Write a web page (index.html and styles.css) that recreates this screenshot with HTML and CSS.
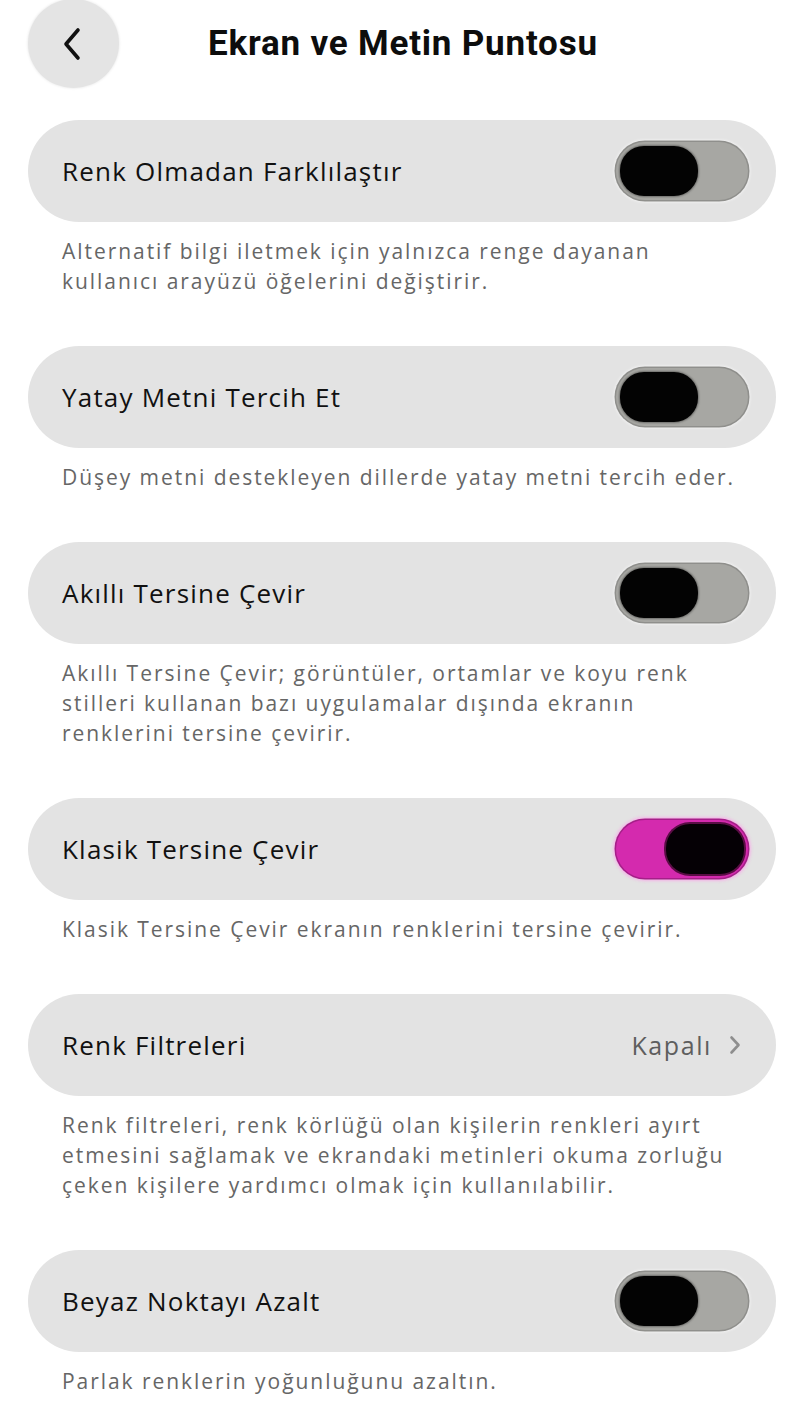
FILE: index.html
```html
<!DOCTYPE html>
<html lang="tr">
<head>
<meta charset="utf-8">
<link rel="stylesheet" href="styles.css">
</head>
<body>
<div class="page">
  <header class="header">
    <div class="back">
      <svg width="26" height="36" viewBox="0 0 26 36"><path d="M19 4 L7 18 L19 32" fill="none" stroke="#111" stroke-width="3.6" stroke-linecap="round" stroke-linejoin="round"/></svg>
    </div>
    <h1 class="title">Ekran ve Metin Puntosu</h1>
  </header>

  <section class="group">
    <div class="row"><span class="label">Renk Olmadan Farklılaştır</span><span class="toggle"><span class="thumb"></span></span></div>
    <p class="desc">Alternatif bilgi iletmek için yalnızca renge dayanan<br>kullanıcı arayüzü öğelerini değiştirir.</p>
  </section>

  <section class="group">
    <div class="row"><span class="label">Yatay Metni Tercih Et</span><span class="toggle"><span class="thumb"></span></span></div>
    <p class="desc">Düşey metni destekleyen dillerde yatay metni tercih eder.</p>
  </section>

  <section class="group">
    <div class="row"><span class="label">Akıllı Tersine Çevir</span><span class="toggle"><span class="thumb"></span></span></div>
    <p class="desc">Akıllı Tersine Çevir; görüntüler, ortamlar ve koyu renk<br>stilleri kullanan bazı uygulamalar dışında ekranın<br>renklerini tersine çevirir.</p>
  </section>

  <section class="group">
    <div class="row"><span class="label">Klasik Tersine Çevir</span><span class="toggle on"><span class="thumb"></span></span></div>
    <p class="desc">Klasik Tersine Çevir ekranın renklerini tersine çevirir.</p>
  </section>

  <section class="group">
    <div class="row"><span class="label">Renk Filtreleri</span><span class="value">Kapalı<svg class="chev" width="14" height="22" viewBox="0 0 14 22"><path d="M3.5 3.5 L10.5 11 L3.5 18.5" fill="none" stroke="#8e8e8e" stroke-width="2.6" stroke-linecap="round" stroke-linejoin="round"/></svg></span></div>
    <p class="desc">Renk filtreleri, renk körlüğü olan kişilerin renkleri ayırt<br>etmesini sağlamak ve ekrandaki metinleri okuma zorluğu<br>çeken kişilere yardımcı olmak için kullanılabilir.</p>
  </section>

  <section class="group">
    <div class="row"><span class="label">Beyaz Noktayı Azalt</span><span class="toggle"><span class="thumb"></span></span></div>
    <p class="desc">Parlak renklerin yoğunluğunu azaltın.</p>
  </section>
</div>
</body>
</html>
```

FILE: styles.css
```css
html, body {
  margin: 0;
  padding: 0;
  background: #ffffff;
}
body {
  font-family: "Open Sans", "Noto Sans", "DejaVu Sans", sans-serif;
  color: #111;
}
.page {
  width: 800px;
  padding: 0 24px 0 28px;
  box-sizing: border-box;
}
.header {
  height: 120px;
  display: flex;
  align-items: flex-start;
}
.back {
  width: 91px;
  height: 89px;
  margin-top: -1px;
  border-radius: 50%;
  background: #e4e4e4;
  box-shadow: 0 0 3px rgba(0,0,0,0.12);
  display: flex;
  align-items: center;
  justify-content: center;
  box-sizing: border-box;
  padding-right: 4px;
}
.title {
  margin: 22px 0 0 89px;
  font-family: "Roboto", "Liberation Sans", sans-serif;
  font-weight: 700;
  font-size: 35px;
  letter-spacing: 0.8px;
  line-height: 44px;
  color: #0d0d0d;
}
.row {
  height: 102px;
  border-radius: 51px;
  background: #e3e3e3;
  display: flex;
  align-items: center;
  justify-content: space-between;
  padding: 0 28px 0 34px;
  box-sizing: border-box;
}
.label {
  font-size: 26px;
  letter-spacing: 1.2px;
  color: #111;
}
.toggle {
  width: 132px;
  height: 58px;
  border-radius: 29px;
  background: #a7a7a3;
  box-shadow: 0 0 0 1.5px #8f8f8c, 0 0 3px 2px rgba(255,255,255,0.7);
  display: flex;
  align-items: center;
  padding: 0 4px;
  box-sizing: border-box;
}
.thumb {
  width: 78px;
  height: 50px;
  border-radius: 24px;
  background: #030303;
  box-shadow: 0 0 2px 1px rgba(0,0,0,0.35);
}
.toggle.on {
  background: #d42aae;
  box-shadow: 0 0 0 1.5px #a51f88, 0 0 3px 3px rgba(248,170,232,0.8);
  justify-content: flex-end;
}
.toggle.on .thumb {
  background: #050005;
  box-shadow: 0 0 0 2px #5a0d45;
}
.value {
  display: flex;
  align-items: center;
  gap: 16px;
  font-size: 25px;
  letter-spacing: 1.6px;
  color: #5e5e5e;
  padding-right: 6px;
}
.chev {
  display: block;
}
.desc {
  margin: 0;
  padding: 14px 0 50px 34px;
  font-size: 21px;
  line-height: 30px;
  letter-spacing: 1.95px;
  color: #666666;
  white-space: nowrap;
}
```
